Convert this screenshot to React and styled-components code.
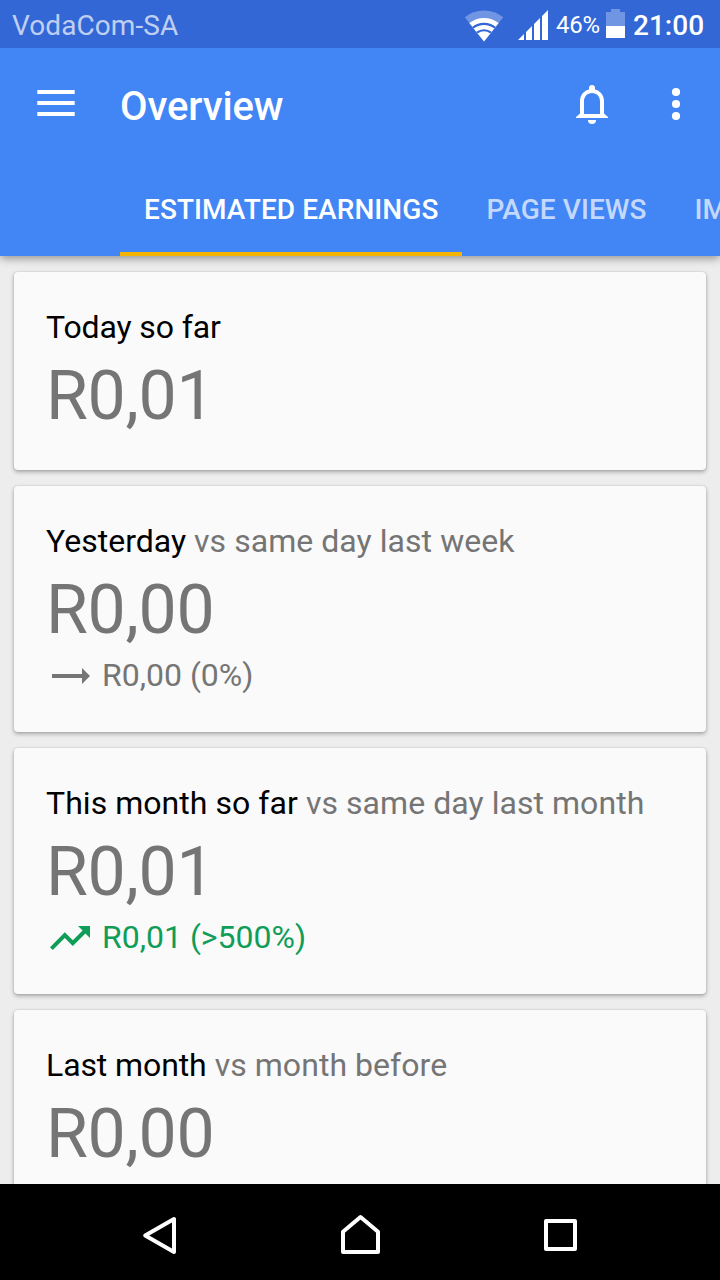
import React from "react";
import styled, { createGlobalStyle } from "styled-components";

const GlobalStyle = createGlobalStyle`
  *, *::before, *::after { box-sizing: border-box; }
  body {
    margin: 0;
    font-family: Roboto, "Liberation Sans", sans-serif;
    background: #ededed;
  }
  svg { display: block; flex: none; }
`;

const Screen = styled.div`
  display: flex;
  flex-direction: column;
  width: 720px;
  height: 1280px;
  overflow: hidden;
`;

const StatusBar = styled.div`
  display: flex;
  align-items: flex-start;
  flex: none;
  height: 48px;
  padding: 0 16px 0 12px;
  background: #3367d6;
  color: #fff;
  z-index: 2;
`;

const Carrier = styled.span`
  flex: 1;
  font-size: 28px;
  line-height: 52px;
  letter-spacing: 0.08px;
  color: rgba(255, 255, 255, 0.7);
`;

const StatusIcons = styled.div`
  display: flex;
  gap: 14px;
`;

const BatteryPercent = styled.span`
  flex: none;
  width: 57px;
  padding-left: 7px;
  font-size: 24px;
  line-height: 50px;
  letter-spacing: -0.3px;
`;

const Clock = styled.span`
  flex: none;
  width: 79px;
  padding-left: 8px;
  font-size: 28px;
  font-weight: 500;
  line-height: 52px;
  white-space: nowrap;
`;

const Header = styled.header`
  display: flex;
  flex-direction: column;
  flex: none;
  height: 208px;
  background: #4285f4;
  color: #fff;
  box-shadow: 0 2px 9px rgba(0, 0, 0, 0.42);
  z-index: 1;
`;

const Toolbar = styled.div`
  display: flex;
  align-items: center;
  height: 112px;
  padding: 0 20px 0 32px;
`;

const Title = styled.h1`
  flex: 1;
  margin: 0 0 0 40px;
  padding-top: 6px;
  font-size: 40px;
  font-weight: 500;
  line-height: 48px;
  letter-spacing: -0.1px;
`;

const IconButton = styled.button`
  display: flex;
  padding: 0;
  margin-left: ${({ $gap }) => $gap || 0}px;
  border: 0;
  background: none;
  color: inherit;
`;

const Tabs = styled.nav`
  display: flex;
  height: 96px;
  padding-left: 120px;
  overflow: hidden;
`;

const Tab = styled.a`
  flex: none;
  height: 96px;
  padding: 0 24px;
  font-size: 28px;
  font-weight: 500;
  line-height: 100px;
  letter-spacing: 0.07px;
  white-space: nowrap;
  color: ${({ $active }) => ($active ? "#fff" : "rgba(255, 255, 255, 0.7)")};
  box-shadow: ${({ $active }) => ($active ? "inset 0 -4px #f4b400" : "none")};
`;

const Content = styled.main`
  display: flex;
  flex-direction: column;
  flex: 1;
  min-height: 0;
  gap: 16px;
  padding: 16px 14px 0;
  overflow: hidden;
`;

const Card = styled.section`
  flex: none;
  height: ${({ $tall }) => ($tall ? 246 : 198)}px;
  padding: 36px 32px 0;
  border-radius: 4px;
  background: #fafafa;
  box-shadow: 0 2px 4px rgba(0, 0, 0, 0.3), 0 0 2px rgba(0, 0, 0, 0.14);
`;

const CardTitle = styled.h2`
  margin: 0;
  font-size: 32px;
  font-weight: 400;
  line-height: 38px;
  letter-spacing: ${({ $tracking }) => $tracking || 0}px;
  color: #000;
  white-space: nowrap;
`;

const Comparison = styled.span`
  letter-spacing: 0.05px;
  color: #757575;
`;

const Amount = styled.div`
  margin-top: 10px;
  font-size: 68px;
  line-height: 80px;
  letter-spacing: -0.3px;
  color: #757575;
`;

const Change = styled.div`
  display: flex;
  align-items: center;
  gap: 8px;
  margin-top: 6px;
  font-size: 32px;
  line-height: 38px;
  color: ${({ $up }) => ($up ? "#0f9d58" : "#757575")};
`;

const NavBar = styled.footer`
  display: flex;
  justify-content: center;
  align-items: center;
  gap: 152px;
  flex: none;
  height: 96px;
  padding-top: 6px;
  background: #000;
  color: #fff;
  z-index: 1;
`;

const WifiIcon = () => (
  <svg width="40" height="48" viewBox="464 0 40 48" fill="none" stroke="#3367d6">
    <path d="M484 41.5 L464.800 17.200 A31 31 0 0 1 503.200 17.200 Z" fill="#fff" fillOpacity="0.3" stroke="none" />
    <path d="M484 41.5 L469.300 23 A23.700 23.700 0 0 1 498.700 23 Z" fill="#fff" stroke="none" />
    <path d="M473 27.700 A17.600 17.600 0 0 1 495 27.700" strokeWidth="2.2" />
    <path d="M477 32.700 A11.200 11.200 0 0 1 491 32.700" strokeWidth="2.2" />
  </svg>
);

const SignalIcon = () => (
  <svg width="31" height="48" viewBox="518 0 31 48" fill="#fff">
    <path d="M518 40l6-6v6zM526 40v-8l6-6v14zM534 40V24l6-6v22zM542 40V16l6-6v30z" />
  </svg>
);

const BatteryIcon = () => (
  <svg width="19" height="48" viewBox="606 0 19 48" fill="#fff">
    <path d="M606 12h5V9h9v3h5v14h-19z" fillOpacity="0.3" />
    <path d="M606 26h19v12h-19z" />
  </svg>
);

const MenuIcon = () => (
  <svg width="48" height="48" viewBox="0 0 48 48" fill="currentColor">
    <path d="M5.3 10h37.4v4H5.3zM5.3 21h37.4v4H5.3zM5.3 32h37.4v4H5.3z" />
  </svg>
);

const BellIcon = () => (
  <svg width="48" height="48" viewBox="568 80 48 48" fill="currentColor">
    <path
      fillRule="evenodd"
      d="M592 85a3 3 0 0 1 3 3v1.5c5.3 1.2 9 5.8 9 11.5v12.6l4 3.4v1h-32v-1l4-3.4V101c0-5.700 3.700-10.300 9-11.500V88a3 3 0 0 1 3-3zM592 93c-4.600 0-8 3.600-8 8v13h16v-13c0-4.400-3.400-8-8-8z"
    />
    <path d="M588 120h8a4 4 0 0 1-8 0z" />
  </svg>
);

const MoreIcon = () => (
  <svg width="48" height="48" viewBox="652 80 48 48" fill="currentColor">
    <circle cx="676" cy="92" r="4.1" />
    <circle cx="676" cy="104" r="4.1" />
    <circle cx="676" cy="116" r="4.1" />
  </svg>
);

const FlatIcon = () => (
  <svg width="48" height="38" viewBox="46 656 48 38" fill="currentColor">
    <path d="M52 674h30v-6l8 8-8 8v-6H52z" />
  </svg>
);

const TrendingUpIcon = () => (
  <svg width="48" height="38" viewBox="46 918 48 38" fill="currentColor">
    <path d="M78 926l4.600 4.600-9.800 9.700-8-8L50 947.200l2.800 2.800 12-12 8 8 12.600-12.600L90 938v-12z" />
  </svg>
);

const BackIcon = () => (
  <svg width="48" height="48" viewBox="136 1211 48 48" fill="none" stroke="currentColor" strokeWidth="4" strokeLinejoin="round">
    <path d="M145.200 1235.500L174 1219v33z" />
  </svg>
);

const HomeIcon = () => (
  <svg width="48" height="48" viewBox="336 1211 48 48" fill="none" stroke="currentColor" strokeWidth="4" strokeLinejoin="round">
    <path d="M343 1252v-20.200l17.500-14.800 17.500 14.800V1252z" />
  </svg>
);

const RecentsIcon = () => (
  <svg width="48" height="48" viewBox="536 1211 48 48" fill="none" stroke="currentColor" strokeWidth="4" strokeLinejoin="round">
    <path d="M546 1221h29v28h-29z" />
  </svg>
);

const cards = [
  { title: "Today so far", amount: "R0,01", tracking: -0.12 },
  { title: "Yesterday", versus: "vs same day last week", amount: "R0,00", change: "R0,00 (0%)" },
  {
    title: "This month so far",
    versus: "vs same day last month",
    amount: "R0,01",
    change: "R0,01 (>500%)",
    up: true,
    tracking: 0.05,
  },
  { title: "Last month", versus: "vs month before", amount: "R0,00", tracking: -0.1 },
];

export default function App() {
  return (
    <>
      <GlobalStyle />
      <Screen>
        <StatusBar>
          <Carrier>VodaCom-SA</Carrier>
          <StatusIcons>
            <WifiIcon />
            <SignalIcon />
          </StatusIcons>
          <BatteryPercent>46%</BatteryPercent>
          <BatteryIcon />
          <Clock>21:00</Clock>
        </StatusBar>
        <Header>
          <Toolbar>
            <IconButton aria-label="Menu"><MenuIcon /></IconButton>
            <Title>Overview</Title>
            <IconButton aria-label="Notifications"><BellIcon /></IconButton>
            <IconButton aria-label="More options" $gap={36}><MoreIcon /></IconButton>
          </Toolbar>
          <Tabs>
            <Tab $active>ESTIMATED EARNINGS</Tab>
            <Tab>PAGE VIEWS</Tab>
            <Tab>IMPRESSIONS</Tab>
          </Tabs>
        </Header>
        <Content>
          {cards.map((card) => (
            <Card key={card.title} $tall={Boolean(card.versus)}>
              <CardTitle $tracking={card.tracking}>
                {card.title}
                {card.versus && <Comparison> {card.versus}</Comparison>}
              </CardTitle>
              <Amount>{card.amount}</Amount>
              {card.change && (
                <Change $up={card.up}>
                  {card.up ? <TrendingUpIcon /> : <FlatIcon />}
                  {card.change}
                </Change>
              )}
            </Card>
          ))}
        </Content>
        <NavBar>
          <IconButton aria-label="Back"><BackIcon /></IconButton>
          <IconButton aria-label="Home"><HomeIcon /></IconButton>
          <IconButton aria-label="Recent apps"><RecentsIcon /></IconButton>
        </NavBar>
      </Screen>
    </>
  );
}
